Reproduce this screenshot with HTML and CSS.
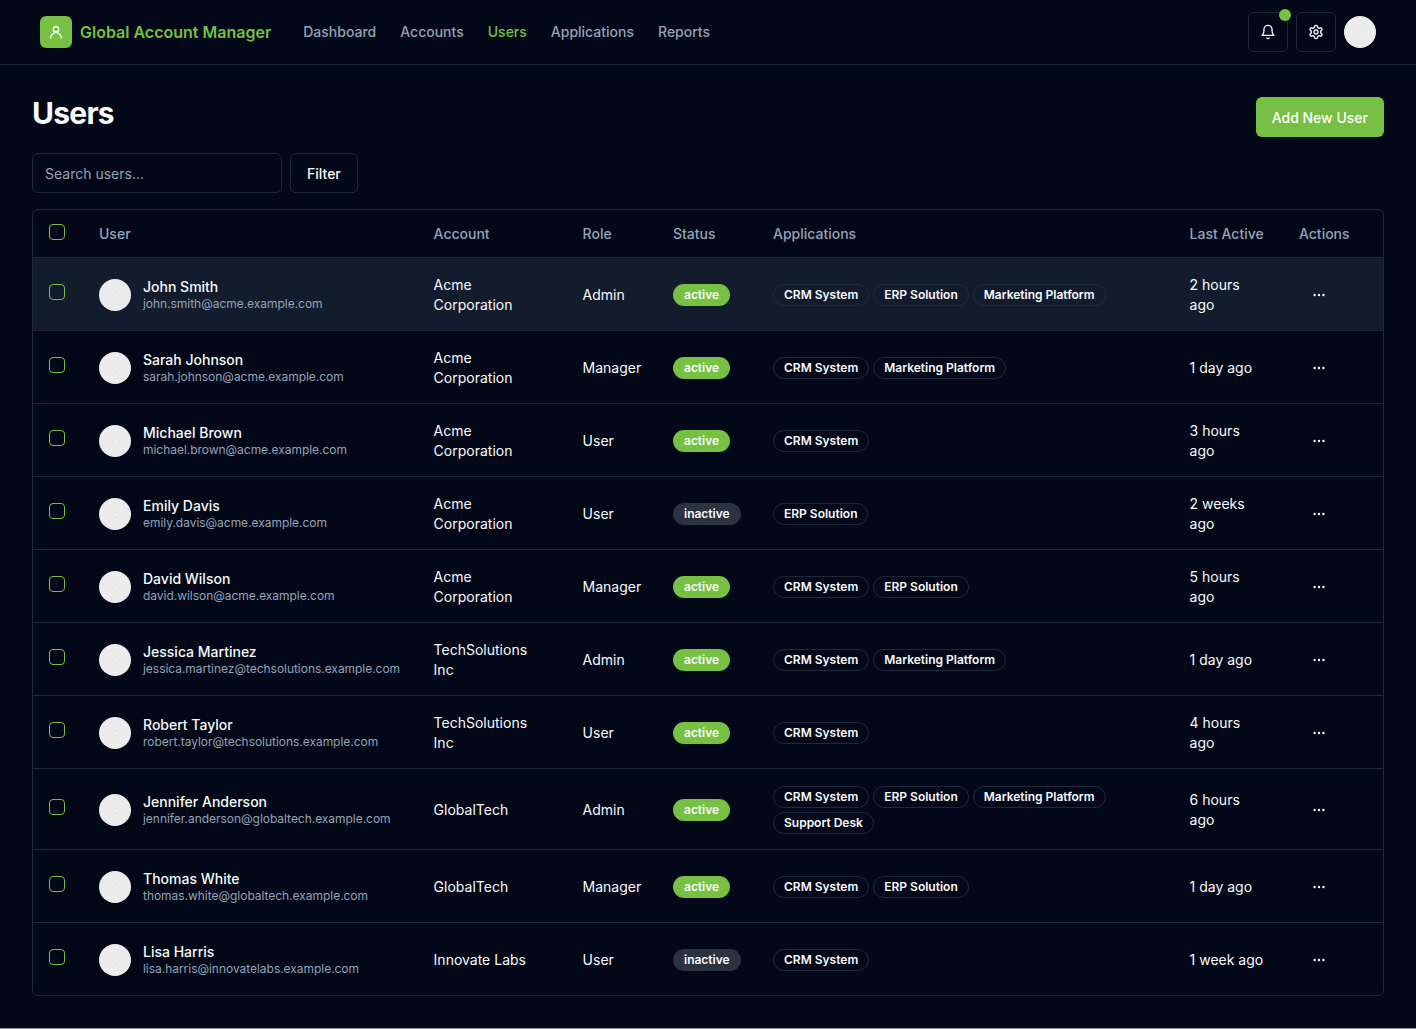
FILE: index.html
```html
<!DOCTYPE html>
<html lang="en">
<head>
<meta charset="utf-8">
<title>Users</title>
<link rel="stylesheet" href="styles.css">
</head>
<body>
<header class="topbar">
  <div class="brand">
    <span class="logo"><svg viewBox="0 0 24 24" width="16" height="16" class="ic"><circle cx="12" cy="8" r="4"/><path d="M20 21a8 8 0 0 0-16 0"/></svg></span>
    <span class="brand-name">Global Account Manager</span>
  </div>
  <nav class="nav">
    <a>Dashboard</a><a>Accounts</a><a class="current">Users</a><a>Applications</a><a>Reports</a>
  </nav>
  <div class="tools">
    <button class="icon-btn"><svg viewBox="0 0 24 24" width="16" height="16" class="ic"><path d="M6 8a6 6 0 0 1 12 0c0 7 3 9 3 9H3s3-2 3-9"/><path d="M10.3 21a1.94 1.94 0 0 0 3.4 0"/></svg><span class="dot"></span></button>
    <button class="icon-btn"><svg viewBox="0 0 24 24" width="16" height="16" class="ic"><path d="M12.22 2h-.44a2 2 0 0 0-2 2v.18a2 2 0 0 1-1 1.73l-.43.25a2 2 0 0 1-2 0l-.15-.08a2 2 0 0 0-2.73.73l-.22.38a2 2 0 0 0 .73 2.73l.15.1a2 2 0 0 1 1 1.72v.51a2 2 0 0 1-1 1.74l-.15.09a2 2 0 0 0-.73 2.73l.22.38a2 2 0 0 0 2.73.73l.15-.08a2 2 0 0 1 2 0l.43.25a2 2 0 0 1 1 1.73V20a2 2 0 0 0 2 2h.44a2 2 0 0 0 2-2v-.18a2 2 0 0 1 1-1.73l.43-.25a2 2 0 0 1 2 0l.15.08a2 2 0 0 0 2.73-.73l.22-.39a2 2 0 0 0-.73-2.73l-.15-.08a2 2 0 0 1-1-1.74v-.5a2 2 0 0 1 1-1.74l.15-.09a2 2 0 0 0 .73-2.73l-.22-.38a2 2 0 0 0-2.73-.73l-.15.08a2 2 0 0 1-2 0l-.43-.25a2 2 0 0 1-1-1.73V4a2 2 0 0 0-2-2z"/><circle cx="12" cy="12" r="3"/></svg></button>
    <span class="avatar"><span class="avatar-mark"></span></span>
  </div>
</header>
<main class="page">
  <div class="page-head">
    <h1>Users</h1>
    <button class="primary">Add New User</button>
  </div>
  <div class="filters">
    <input class="search" placeholder="Search users...">
    <button class="outline">Filter</button>
  </div>
  <div class="table-wrap">
    <table>
      <thead>
        <tr>
          <th class="c-check"><span class="check"></span></th>
          <th class="c-user">User</th><th class="c-account">Account</th><th class="c-role">Role</th><th class="c-status">Status</th><th class="c-apps">Applications</th><th class="c-last">Last Active</th><th class="c-actions">Actions</th>
        </tr>
      </thead>
      <tbody>
        <tr class="hover"><td><span class="check"></span></td><td><div class="user"><span class="avatar"><span class="avatar-mark"></span></span><div><div class="name">John Smith</div><div class="email">john.smith@acme.example.com</div></div></div></td><td>Acme Corporation</td><td>Admin</td><td><span class="badge on">active</span></td><td><div class="apps"><span class="app">CRM System</span><span class="app">ERP Solution</span><span class="app">Marketing Platform</span></div></td><td>2 hours ago</td><td class="more"><button class="more-btn"><svg viewBox="0 0 16 16" width="16" height="16" class="dots"><circle cx="3.6" cy="8" r="1.2"/><circle cx="8" cy="8" r="1.2"/><circle cx="12.4" cy="8" r="1.2"/></svg></button></td></tr>
        <tr><td><span class="check"></span></td><td><div class="user"><span class="avatar"><span class="avatar-mark"></span></span><div><div class="name">Sarah Johnson</div><div class="email">sarah.johnson@acme.example.com</div></div></div></td><td>Acme Corporation</td><td>Manager</td><td><span class="badge on">active</span></td><td><div class="apps"><span class="app">CRM System</span><span class="app">Marketing Platform</span></div></td><td>1 day ago</td><td class="more"><button class="more-btn"><svg viewBox="0 0 16 16" width="16" height="16" class="dots"><circle cx="3.6" cy="8" r="1.2"/><circle cx="8" cy="8" r="1.2"/><circle cx="12.4" cy="8" r="1.2"/></svg></button></td></tr>
        <tr><td><span class="check"></span></td><td><div class="user"><span class="avatar"><span class="avatar-mark"></span></span><div><div class="name">Michael Brown</div><div class="email">michael.brown@acme.example.com</div></div></div></td><td>Acme Corporation</td><td>User</td><td><span class="badge on">active</span></td><td><div class="apps"><span class="app">CRM System</span></div></td><td>3 hours ago</td><td class="more"><button class="more-btn"><svg viewBox="0 0 16 16" width="16" height="16" class="dots"><circle cx="3.6" cy="8" r="1.2"/><circle cx="8" cy="8" r="1.2"/><circle cx="12.4" cy="8" r="1.2"/></svg></button></td></tr>
        <tr><td><span class="check"></span></td><td><div class="user"><span class="avatar"><span class="avatar-mark"></span></span><div><div class="name">Emily Davis</div><div class="email">emily.davis@acme.example.com</div></div></div></td><td>Acme Corporation</td><td>User</td><td><span class="badge off">inactive</span></td><td><div class="apps"><span class="app">ERP Solution</span></div></td><td>2 weeks ago</td><td class="more"><button class="more-btn"><svg viewBox="0 0 16 16" width="16" height="16" class="dots"><circle cx="3.6" cy="8" r="1.2"/><circle cx="8" cy="8" r="1.2"/><circle cx="12.4" cy="8" r="1.2"/></svg></button></td></tr>
        <tr><td><span class="check"></span></td><td><div class="user"><span class="avatar"><span class="avatar-mark"></span></span><div><div class="name">David Wilson</div><div class="email">david.wilson@acme.example.com</div></div></div></td><td>Acme Corporation</td><td>Manager</td><td><span class="badge on">active</span></td><td><div class="apps"><span class="app">CRM System</span><span class="app">ERP Solution</span></div></td><td>5 hours ago</td><td class="more"><button class="more-btn"><svg viewBox="0 0 16 16" width="16" height="16" class="dots"><circle cx="3.6" cy="8" r="1.2"/><circle cx="8" cy="8" r="1.2"/><circle cx="12.4" cy="8" r="1.2"/></svg></button></td></tr>
        <tr><td><span class="check"></span></td><td><div class="user"><span class="avatar"><span class="avatar-mark"></span></span><div><div class="name">Jessica Martinez</div><div class="email">jessica.martinez@techsolutions.example.com</div></div></div></td><td>TechSolutions Inc</td><td>Admin</td><td><span class="badge on">active</span></td><td><div class="apps"><span class="app">CRM System</span><span class="app">Marketing Platform</span></div></td><td>1 day ago</td><td class="more"><button class="more-btn"><svg viewBox="0 0 16 16" width="16" height="16" class="dots"><circle cx="3.6" cy="8" r="1.2"/><circle cx="8" cy="8" r="1.2"/><circle cx="12.4" cy="8" r="1.2"/></svg></button></td></tr>
        <tr><td><span class="check"></span></td><td><div class="user"><span class="avatar"><span class="avatar-mark"></span></span><div><div class="name">Robert Taylor</div><div class="email">robert.taylor@techsolutions.example.com</div></div></div></td><td>TechSolutions Inc</td><td>User</td><td><span class="badge on">active</span></td><td><div class="apps"><span class="app">CRM System</span></div></td><td>4 hours ago</td><td class="more"><button class="more-btn"><svg viewBox="0 0 16 16" width="16" height="16" class="dots"><circle cx="3.6" cy="8" r="1.2"/><circle cx="8" cy="8" r="1.2"/><circle cx="12.4" cy="8" r="1.2"/></svg></button></td></tr>
        <tr><td><span class="check"></span></td><td><div class="user"><span class="avatar"><span class="avatar-mark"></span></span><div><div class="name">Jennifer Anderson</div><div class="email">jennifer.anderson@globaltech.example.com</div></div></div></td><td>GlobalTech</td><td>Admin</td><td><span class="badge on">active</span></td><td><div class="apps"><span class="app">CRM System</span><span class="app">ERP Solution</span><span class="app">Marketing Platform</span><span class="app">Support Desk</span></div></td><td>6 hours ago</td><td class="more"><button class="more-btn"><svg viewBox="0 0 16 16" width="16" height="16" class="dots"><circle cx="3.6" cy="8" r="1.2"/><circle cx="8" cy="8" r="1.2"/><circle cx="12.4" cy="8" r="1.2"/></svg></button></td></tr>
        <tr><td><span class="check"></span></td><td><div class="user"><span class="avatar"><span class="avatar-mark"></span></span><div><div class="name">Thomas White</div><div class="email">thomas.white@globaltech.example.com</div></div></div></td><td>GlobalTech</td><td>Manager</td><td><span class="badge on">active</span></td><td><div class="apps"><span class="app">CRM System</span><span class="app">ERP Solution</span></div></td><td>1 day ago</td><td class="more"><button class="more-btn"><svg viewBox="0 0 16 16" width="16" height="16" class="dots"><circle cx="3.6" cy="8" r="1.2"/><circle cx="8" cy="8" r="1.2"/><circle cx="12.4" cy="8" r="1.2"/></svg></button></td></tr>
        <tr><td><span class="check"></span></td><td><div class="user"><span class="avatar"><span class="avatar-mark"></span></span><div><div class="name">Lisa Harris</div><div class="email">lisa.harris@innovatelabs.example.com</div></div></div></td><td>Innovate Labs</td><td>User</td><td><span class="badge off">inactive</span></td><td><div class="apps"><span class="app">CRM System</span></div></td><td>1 week ago</td><td class="more"><button class="more-btn"><svg viewBox="0 0 16 16" width="16" height="16" class="dots"><circle cx="3.6" cy="8" r="1.2"/><circle cx="8" cy="8" r="1.2"/><circle cx="12.4" cy="8" r="1.2"/></svg></button></td></tr>
      </tbody>
    </table>
  </div>
</main>
</body>
</html>
```

FILE: styles.css
```css
* { box-sizing: border-box; }
html { background: #8b8f96; }
body {
  margin: 0;
  height: 1028px;
  background: #020817;
  color: #f8fafc;
  font-family: Inter, "Liberation Sans", sans-serif;
  font-size: 14px;
  line-height: 20px;
}
button, input { font-family: inherit; }
.ic { fill: none; stroke: currentColor; stroke-width: 2; stroke-linecap: round; stroke-linejoin: round; display: block; }

.topbar {
  height: 65px;
  border-bottom: 1px solid #1e293b;
  display: flex;
  align-items: center;
  padding: 0 40px;
}
.brand { display: flex; align-items: center; gap: 8px; }
.logo {
  width: 32px; height: 32px; border-radius: 6px;
  background: #76c043; color: #fff;
  display: flex; align-items: center; justify-content: center;
}
.brand-name { color: #76c043; font-size: 16px; font-weight: 600; line-height: 24px; }
.nav { display: flex; gap: 24px; margin-left: 32px; }
.nav a { color: #94a3b8; font-weight: 500; }
.nav a.current { color: #76c043; }
.tools { margin-left: auto; display: flex; align-items: center; gap: 8px; }
.icon-btn {
  position: relative;
  width: 40px; height: 40px; padding: 0;
  background: #020817; color: #f8fafc;
  border: 1px solid #1e293b; border-radius: 6px;
  display: flex; align-items: center; justify-content: center;
}
.dot {
  position: absolute; top: -4px; right: -4px;
  width: 12px; height: 12px; border-radius: 50%;
  background: #76c043;
}
.avatar {
  width: 32px; height: 32px; border-radius: 50%;
  background: #ececec; flex: none;
  display: flex; align-items: center; justify-content: center;
}
.avatar-mark { width: 5px; height: 5px; border-radius: 50%; background: #f6f6f6; border: 1px solid #e3e3e3; }

.page { padding: 32px; }
.page-head { display: flex; justify-content: space-between; align-items: flex-start; }
h1 { margin: 0; font-size: 30px; line-height: 32px; font-weight: 700; letter-spacing: -0.75px; }
.primary {
  height: 40px; padding: 0 16px;
  background: #76c043; color: #fff;
  border: 0; border-radius: 6px;
  font-size: 14px; font-weight: 500;
}
.filters { display: flex; gap: 8px; margin-top: 16px; }
.search {
  width: 250px; height: 40px; padding: 0 12px;
  background: #020817; color: #f8fafc;
  border: 1px solid #1e293b; border-radius: 6px;
  font-size: 14px; outline: 0;
}
.search::placeholder { color: #94a3b8; opacity: 1; }
.outline {
  height: 40px; padding: 0 16px;
  background: #020817; color: #f8fafc;
  border: 1px solid #1e293b; border-radius: 6px;
  font-size: 14px; font-weight: 500;
}
.table-wrap { margin-top: 16px; border: 1px solid #1e293b; border-radius: 6px; overflow: hidden; }
table { width: 100%; border-collapse: separate; border-spacing: 0; table-layout: fixed; }
th { height: 48px; padding: 1px 16px 0; text-align: left; color: #94a3b8; font-weight: 500; border-bottom: 1px solid #1e293b; }
td { padding: 17px 16px 15px; vertical-align: middle; color: #f8fafc; border-bottom: 1px solid #1e293b; }
tbody tr:last-child td { border-bottom: 0; }
tr.hover { background: #131c2c; }
.c-check { width: 50px; }
.c-user { width: 334.6px; }
.c-account { width: 149px; }
.c-role { width: 90.4px; }
.c-status { width: 100px; }
.c-apps { width: 416.6px; }
.c-last { width: 109.4px; }
.c-actions { width: 100px; }
.check {
  display: inline-block; width: 16px; height: 16px;
  border: 1px solid #76c043; border-radius: 4px;
}
td .check { vertical-align: 1px; }
.user { display: flex; align-items: center; gap: 12px; }
.name { font-weight: 500; }
.email { color: #94a3b8; font-size: 12px; line-height: 16px; margin: -1px 0 1px; letter-spacing: -0.035px; }
.badge {
  display: inline-block; padding: 2px 10px;
  border: 1px solid transparent;
  border-radius: 999px; color: #f8fafc;
  font-size: 12px; line-height: 16px; font-weight: 600;
}
.badge.on { background: #76c043; }
.badge.off { background: #2b3240; }
.apps { display: flex; flex-wrap: wrap; gap: 4px; }
.app {
  padding: 2px 10px; border: 1px solid #1e293b; border-radius: 999px;
  font-size: 12px; line-height: 16px; font-weight: 600;
}
.more-btn {
  width: 40px; height: 40px; padding: 0;
  background: transparent; border: 0; border-radius: 6px;
  display: flex; align-items: center; justify-content: center;
}
.dots { display: block; fill: #f8fafc; }
```
